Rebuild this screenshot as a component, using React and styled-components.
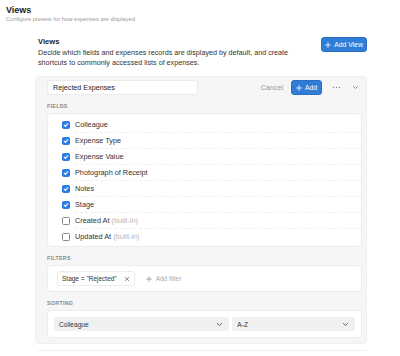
import styled, { createGlobalStyle } from 'styled-components';

const GlobalStyle = createGlobalStyle`
    body {
        margin: 0;
        background: #fff;
        font-family: "Liberation Sans", Arial, sans-serif;
        color: #2a2a2a;
    }
`;

const Page = styled.div`
    width: 400px;
    height: 356px;
    overflow: hidden;
    padding: 5px 6px 0;
    box-sizing: border-box;
`;

const Title = styled.div`
    font-size: 9px;
    font-weight: 700;
    line-height: 10px;
    color: #222;
`;

const Subtitle = styled.div`
    font-size: 5.8px;
    line-height: 8px;
    color: #9a9a9a;
`;

const Section = styled.div`
    margin: 14px 27px 0 29px;
`;

const SectionHead = styled.div`
    display: flex;
    justify-content: space-between;
    align-items: flex-start;
    padding-left: 3px;
`;

const SectionTitle = styled.div`
    font-size: 7.6px;
    font-weight: 700;
    line-height: 10px;
    color: #222;
`;

const Description = styled.div`
    font-size: 7.2px;
    line-height: 10px;
    color: #333;
    margin-top: 1px;
    white-space: nowrap;
`;

const BlueButton = styled.button`
    display: flex;
    align-items: center;
    justify-content: center;
    gap: 3px;
    width: ${p => p.$w}px;
    height: 15px;
    padding: 0;
    white-space: nowrap;
    background: #2f7dd6;
    border: 1px solid #2a6fc0;
    border-radius: 3px;
    color: #fff;
    font-family: inherit;
    font-size: 6.8px;
    cursor: pointer;
`;

const Panel = styled.div`
    margin-top: 8px;
    background: #f6f6f6;
    border: 1px solid #efefef;
    border-radius: 4px;
    padding: 3px 4px 5px 11px;
`;

const Toolbar = styled.div`
    display: flex;
    align-items: center;
    height: 15px;
`;

const NameInput = styled.div`
    width: 151px;
    height: 15px;
    box-sizing: border-box;
    background: #fff;
    border: 1px solid #ebebeb;
    border-radius: 3px;
    padding: 0 5px;
    font-size: 7.2px;
    line-height: 13px;
    color: #222;
`;

const Cancel = styled.span`
    margin-left: auto;
    margin-right: 8px;
    font-size: 7.2px;
    color: #999;
`;

const IconSlot = styled.span`
    display: flex;
    align-items: center;
    justify-content: center;
    width: ${p => p.$w || 12}px;
    margin-left: ${p => p.$gap}px;
`;

const Label = styled.div`
    font-size: 5.3px;
    font-weight: 700;
    letter-spacing: 0.3px;
    color: #888;
    text-transform: uppercase;
    line-height: 7px;
    margin: ${p => p.$top}px 0 3px;
`;

const Box = styled.div`
    background: #fff;
    border: 1px solid #ececec;
    border-radius: 4px;
    padding: ${p => p.$pad};
`;

const Row = styled.div`
    display: flex;
    align-items: center;
    height: 16px;
`;

const Handle = styled.span`
    width: 3px;
    height: 6px;
    margin: 0 4px 0 7px;
    background-image: radial-gradient(circle, #c9c9c9 0.6px, transparent 0.7px);
    background-size: 2px 2px;
`;

const Check = styled.span`
    width: 8px;
    height: 8px;
    box-sizing: border-box;
    border-radius: 1.5px;
    display: flex;
    align-items: center;
    justify-content: center;
    background: ${p => (p.$on ? '#2c7be5' : '#fff')};
    border: 1px solid ${p => (p.$on ? '#2c7be5' : '#8a8a8a')};
`;

const RowText = styled.span`
    flex: 1;
    margin-left: 5px;
    height: 16px;
    line-height: 16px;
    font-size: 7.3px;
    color: #333;
    border-bottom: ${p => (p.$last ? 'none' : '1px dashed #f0f0f0')};
    box-sizing: border-box;
`;

const Muted = styled.span`
    color: #b5b5b5;
`;

const FilterRow = styled.div`
    display: flex;
    align-items: center;
    gap: 11px;
`;

const Chip = styled.div`
    display: flex;
    align-items: center;
    gap: 7px;
    height: 15px;
    box-sizing: border-box;
    padding: 0 4px;
    border: 1px solid #ececec;
    border-radius: 3px;
    font-size: 6.5px;
    color: #333;
`;

const AddFilter = styled.span`
    display: flex;
    align-items: center;
    gap: 4px;
    font-size: 6.5px;
    color: #aaa;
`;

const SortRow = styled.div`
    display: flex;
    gap: 3px;
`;

const Select = styled.div`
    flex: ${p => p.$grow};
    display: flex;
    align-items: center;
    justify-content: space-between;
    height: 14px;
    padding: 0 6px 0 5px;
    background: #eff0f2;
    border-radius: 2px;
    font-size: 6.6px;
    color: #333;
`;

const Divider = styled.div`
    height: 1px;
    background: #efefef;
    margin: 6px 0 0 3px;
`;

const fields = [
    { name: 'Colleague', on: true },
    { name: 'Expense Type', on: true },
    { name: 'Expense Value', on: true },
    { name: 'Photograph of Receipt', on: true },
    { name: 'Notes', on: true },
    { name: 'Stage', on: true },
    { name: 'Created At', on: false, builtIn: true },
    { name: 'Updated At', on: false, builtIn: true },
];

const Plus = ({ size = 6, color = '#fff' }) => (
    <svg width={size} height={size} viewBox="0 0 10 10">
        <path d="M5 1v8M1 5h8" stroke={color} strokeWidth="1.4" strokeLinecap="round" />
    </svg>
);

const Chevron = ({ color = '#666', size = 7 }) => (
    <svg width={size} height={size} viewBox="0 0 10 10">
        <path d="M2 3.5l3 3 3-3" fill="none" stroke={color} strokeWidth="1.3" strokeLinecap="round" strokeLinejoin="round" />
    </svg>
);

const Tick = () => (
    <svg width="6" height="6" viewBox="0 0 10 10">
        <path d="M2 5.2l2 2 4-4.4" fill="none" stroke="#fff" strokeWidth="1.8" strokeLinecap="round" strokeLinejoin="round" />
    </svg>
);

const Dots = () => (
    <svg width="9" height="3" viewBox="0 0 9 3">
        <circle cx="1.5" cy="1.5" r="0.7" fill="#888" />
        <circle cx="4.5" cy="1.5" r="0.7" fill="#888" />
        <circle cx="7.5" cy="1.5" r="0.7" fill="#888" />
    </svg>
);

const Cross = () => (
    <svg width="6" height="6" viewBox="0 0 10 10">
        <path d="M2 2l6 6M8 2l-6 6" stroke="#666" strokeWidth="1.2" strokeLinecap="round" />
    </svg>
);

export default function App() {
    return (
        <Page>
            <GlobalStyle />
            <Title>Views</Title>
            <Subtitle>Configure presets for how expenses are displayed</Subtitle>
            <Section>
                <SectionHead>
                    <div>
                        <SectionTitle>Views</SectionTitle>
                        <Description>
                            Decide which fields and expenses records are displayed by default, and create
                            <br />
                            shortcuts to commonly accessed lists of expenses.
                        </Description>
                    </div>
                    <BlueButton type="button" $w={46}>
                        <Plus /> Add View
                    </BlueButton>
                </SectionHead>
                <Panel>
                    <Toolbar>
                        <NameInput>Rejected Expenses</NameInput>
                        <Cancel>Cancel</Cancel>
                        <BlueButton type="button" $w={31}>
                            <Plus /> Add
                        </BlueButton>
                        <IconSlot $gap={8}>
                            <Dots />
                        </IconSlot>
                        <IconSlot $gap={7}>
                            <Chevron color="#888" />
                        </IconSlot>
                        <IconSlot $gap={0} $w={1} />
                    </Toolbar>
                    <Label $top={8}>Fields</Label>
                    <Box $pad="3px 0 1px">
                        {fields.map((f, i) => (
                            <Row key={f.name}>
                                <Handle />
                                <Check $on={f.on}>{f.on && <Tick />}</Check>
                                <RowText $last={i === fields.length - 1}>
                                    {f.name} {f.builtIn && <Muted>(built-in)</Muted>}
                                </RowText>
                            </Row>
                        ))}
                    </Box>
                    <Label $top={8}>Filters</Label>
                    <Box $pad="5px 9px">
                        <FilterRow>
                            <Chip>
                                Stage = "Rejected" <Cross />
                            </Chip>
                            <AddFilter>
                                <Plus color="#999" /> Add filter
                            </AddFilter>
                        </FilterRow>
                    </Box>
                    <Label $top={8}>Sorting</Label>
                    <Box $pad="6px 6px">
                        <SortRow>
                            <Select $grow={178}>
                                Colleague <Chevron color="#555" />
                            </Select>
                            <Select $grow={121}>
                                A-Z <Chevron color="#555" />
                            </Select>
                        </SortRow>
                    </Box>
                </Panel>
                <Divider />
            </Section>
        </Page>
    );
}
